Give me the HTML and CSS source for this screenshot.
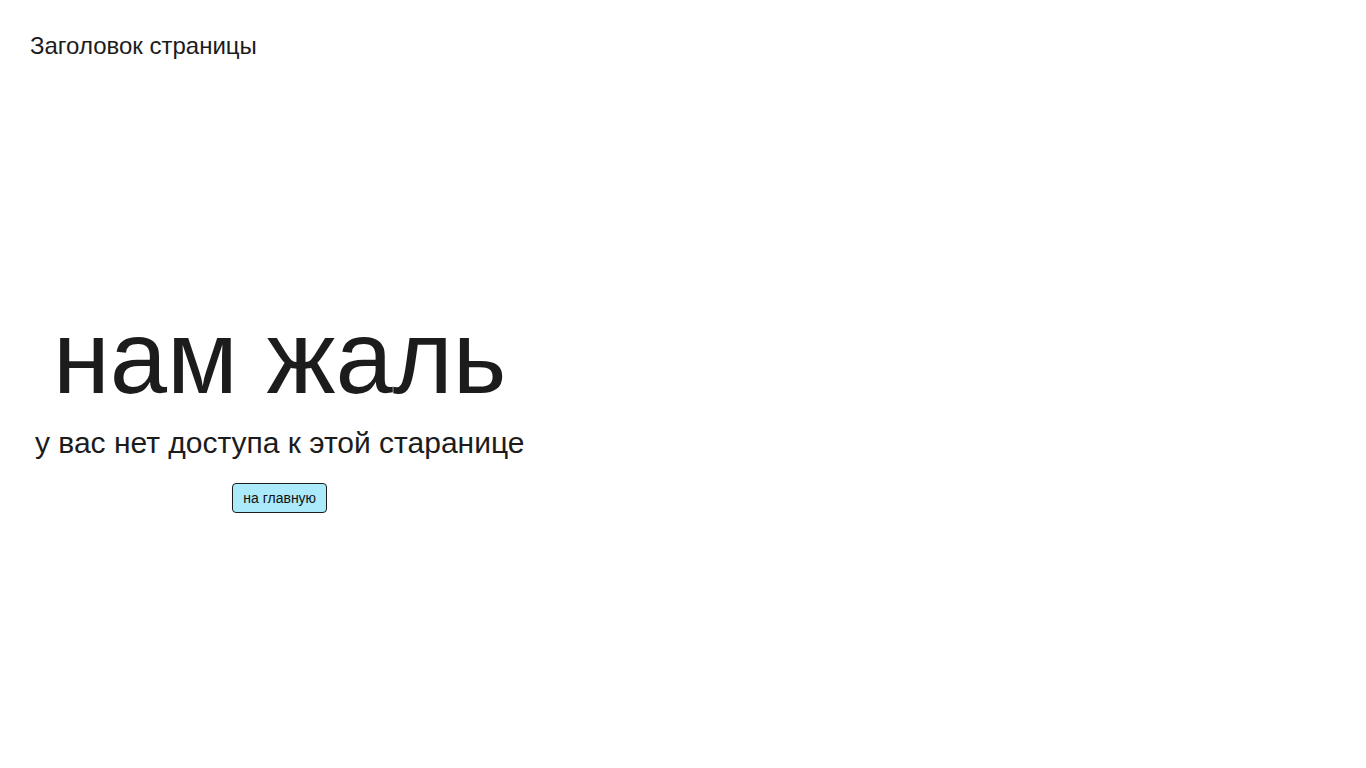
FILE: index.html
```html
<!DOCTYPE html>
<html lang="ru">
<head>
<meta charset="utf-8">
<title>Заголовок страницы</title>
<link rel="stylesheet" href="styles.css">
</head>
<body>
<header class="header">
  <h1 class="header__title">Заголовок страницы</h1>
</header>
<main class="error">
  <div class="error__box">
    <h2 class="error__title">нам жаль</h2>
    <p class="error__text">у вас нет доступа к этой старанице</p>
    <button class="error__btn" type="button">на главную</button>
  </div>
</main>
</body>
</html>
```

FILE: styles.css
```css
* { box-sizing: border-box; }
html, body { margin: 0; padding: 0; background: #fff; }
body {
  font-family: "Liberation Sans", Arial, sans-serif;
  color: #1c1c1c;
}
.header { padding: 32px 30px 0; }
.header__title {
  margin: 0;
  font-size: 24px;
  font-weight: 400;
  line-height: 28px;
}
.error {
  padding: 0 30px;
  margin-top: 246px;
}
.error__box {
  display: inline-flex;
  flex-direction: column;
  align-items: center;
  padding: 0 5px;
}
.error__title {
  margin: 0;
  font-size: 103px;
  font-weight: 400;
  line-height: 1;
}
.error__text {
  margin: 16px 0 0;
  font-size: 30px;
  line-height: 36px;
}
.error__btn {
  margin-top: 22px;
  height: 30px;
  min-width: 95px;
  padding: 0 10px;
  font-family: "Liberation Sans", Arial, sans-serif;
  font-size: 14px;
  color: #111;
  background: #aaeafb;
  border: 1px solid #1c1c1c;
  border-radius: 4px;
}
```
